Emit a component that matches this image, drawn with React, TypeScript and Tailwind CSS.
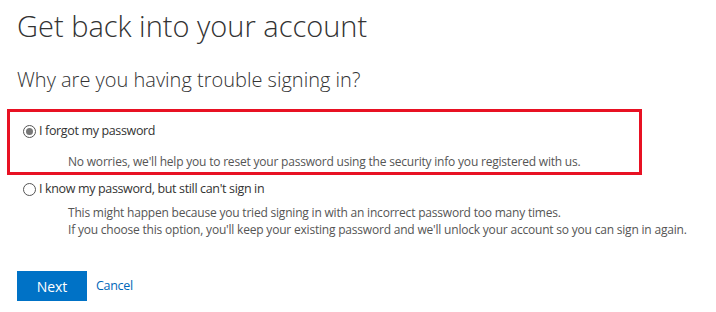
import React from 'react';

const Radio = ({ checked }: { checked?: boolean }) => (
  <span className="inline-flex h-[13px] w-[13px] shrink-0 items-center justify-center rounded-full border border-[#555] bg-white">
    {checked && <span className="h-[7px] w-[7px] rounded-full bg-[#777]" />}
  </span>
);

export default function App() {
  return (
    <div className="h-[312px] w-[716px] bg-white text-[#333] font-['Segoe_UI','Open_Sans',sans-serif]">
      <div className="pl-[17px] pt-[6px]">
        <h1 className="text-[29px] font-light leading-[40px] text-[#333]">Get back into your account</h1>
        <h2 className="mt-[20px] text-[20px] font-light leading-[28px] text-[#333]">Why are you having trouble signing in?</h2>
      </div>

      <div className="ml-[7px] mt-[15px] h-[66px] w-[635px] border-[3px] border-[#e81123] pl-[13px] pt-[10px]">
        <label className="flex items-center gap-[3px] text-[12.5px] leading-[18px] tracking-[-0.35px] text-[#333]">
          <Radio checked />
          I forgot my password
        </label>
        <p className="mt-[13px] pl-[45px] text-[12px] leading-[17px] tracking-[-0.2px] text-[#555]">
          No worries, we'll help you to reset your password using the security info you registered with us.
        </p>
      </div>

      <div className="pl-[23px] pt-[5px]">
        <label className="flex items-center gap-[3px] text-[12.5px] leading-[18px] tracking-[-0.35px] text-[#333]">
          <Radio />
          I know my password, but still can't sign in
        </label>
        <div className="mt-[6px] pl-[45px] text-[12px] leading-[17px] tracking-[-0.2px] text-[#555]">
          <p>This might happen because you tried signing in with an incorrect password too many times.</p>
          <p>If you choose this option, you'll keep your existing password and we'll unlock your account so you can sign in again.</p>
        </div>
      </div>

      <div className="mt-[33px] flex items-center pl-[17px]">
        <button className="h-[30px] w-[70px] bg-[#0072c6] text-[14px] text-white">Next</button>
        <a className="ml-[9px] text-[12.5px] tracking-[-0.3px] text-[#0067b8]" href="#">Cancel</a>
      </div>
    </div>
  );
}
